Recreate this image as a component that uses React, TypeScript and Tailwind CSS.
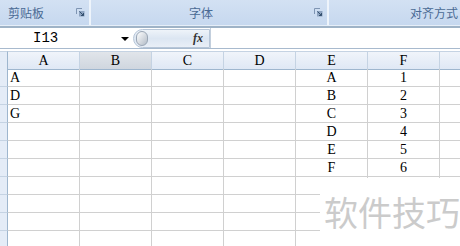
import React from "react";

const cols = ["A", "B", "C", "D", "E", "F"];

const rows: string[][] = [
  ["A", "", "", "", "A", "1"],
  ["D", "", "", "", "B", "2"],
  ["G", "", "", "", "C", "3"],
  ["", "", "", "", "D", "4"],
  ["", "", "", "", "E", "5"],
  ["", "", "", "", "F", "6"],
  ["", "", "", "", "", ""],
  ["", "", "", "", "", ""],
  ["", "", "", "", "", ""],
  ["", "", "", "", "", ""],
];

function Launcher() {
  return (
    <svg width="9" height="9" viewBox="0 0 9 9" className="shrink-0">
      <path d="M0.5 0.5 H6 M0.5 0.5 V6" stroke="#7f95b3" strokeWidth="1" fill="none" />
      <rect x="3" y="3" width="5.5" height="5.5" fill="#8da3c0" />
      <path d="M3.5 3.5 L7.5 7.5 M5 7.5 H7.5 V5" stroke="#34506f" strokeWidth="1" fill="none" />
    </svg>
  );
}

const cjk = { fontFamily: '"Noto Sans CJK SC", sans-serif' };

export default function App() {
  return (
    <div className="w-[460px] h-[246px] overflow-hidden relative bg-white" style={{ fontFamily: '"Liberation Serif", serif' }}>
      {/* ribbon group labels */}
      <div className="h-[25px] flex bg-[#dfe9f6]">
        <div className="w-[91px] h-full flex items-center bg-gradient-to-b from-[#d3e1f3] to-[#c6d8ef] border-r-2 border-[#eef4fb] relative">
          <span className="pl-[8px] text-[12px] text-[#4a6a94]" style={cjk}>剪贴板</span>
          <div className="absolute right-[4px] top-[8px]">
            <Launcher />
          </div>
        </div>
        <div className="w-[238px] h-full flex items-center justify-center bg-gradient-to-b from-[#d3e1f3] to-[#c6d8ef] border-r-2 border-[#eef4fb] relative">
          <span className="text-[12px] text-[#4a6a94] pr-[16px]" style={cjk}>字体</span>
          <div className="absolute right-[4px] top-[8px]">
            <Launcher />
          </div>
        </div>
        <div className="flex-1 h-full flex items-center justify-end pr-[2px] bg-gradient-to-b from-[#d3e1f3] to-[#c6d8ef]">
          <span className="text-[12px] text-[#4a6a94]" style={cjk}>对齐方式</span>
        </div>
      </div>
      <div className="h-[1px] bg-[#e6eef8]" />
      <div className="h-[2px] bg-[#9fb3c7]" />

      {/* formula bar */}
      <div className="h-[20px] flex items-center bg-white">
        <div className="w-[133px] h-full flex items-center relative">
          <span className="pl-[33px] text-[14px] text-black" style={{ fontFamily: '"Liberation Mono", monospace' }}>I13</span>
          <div className="absolute left-[121px] top-[9px] w-0 h-0 border-l-[4px] border-r-[4px] border-t-[4px] border-l-transparent border-r-transparent border-t-black" />
        </div>
        <div className="w-[77px] h-[19px] flex items-center relative rounded-l-full bg-gradient-to-b from-[#eef3f9] via-[#dce6f2] to-[#e9eff7] border border-[#b7c6d8]">
          <div className="ml-[2px] w-[12px] h-[15px] rounded-full bg-gradient-to-br from-[#ffffff] to-[#b3bcc7] border border-[#9aa6b5]" />
          <span className="ml-auto mr-[6px] text-[12px] italic font-bold text-[#333]">fx</span>
        </div>
        <div className="flex-1 h-full border-l border-[#c3cfdd] bg-white" />
      </div>
      <div className="h-[1px] bg-[#a8bace]" />
      <div className="h-[2px] bg-white" />

      {/* sheet grid */}
      <div className="grid grid-cols-[8px_72px_72px_72px_72px_72px_72px_20px] auto-rows-[18px]">
        <div className="h-[19px] bg-[#e4ecf7] border-r border-b border-[#9eb6ce] border-t border-t-[#c5d3e3]" />
        {cols.map((c) => (
          <div
            key={c}
            className={`h-[19px] flex items-center justify-center text-[14px] text-black border-r border-b border-t border-t-[#c5d3e3] border-r-[#c5d3e3] border-b-[#9eb6ce] ${
              c === "B" ? "bg-gradient-to-b from-[#e1e5ea] to-[#cfd6df]" : "bg-gradient-to-b from-[#f0f4fa] to-[#dfe8f5]"
            }`}
          >
            {c}
          </div>
        ))}
        <div className="h-[19px] border-b border-t border-t-[#c5d3e3] border-b-[#9eb6ce] bg-gradient-to-b from-[#f0f4fa] to-[#dfe8f5]" />

        {rows.map((r, i) => (
          <React.Fragment key={i}>
            <div className="bg-[#e4ecf7] border-r border-b border-r-[#9eb6ce] border-b-[#c5d3e3]" />
            {r.map((v, j) => (
              <div
                key={j}
                className={`border-r border-b border-[#d0d0d0] flex items-center text-[14px] text-black leading-none ${
                  j >= 4 ? "justify-center" : "pl-[2px]"
                }`}
              >
                {v}
              </div>
            ))}
            <div className="border-b border-[#d0d0d0]" />
          </React.Fragment>
        ))}
      </div>

      {/* watermark */}
      <div className="absolute left-[320px] top-[178px] w-[140px] h-[68px] bg-white flex items-start pt-[17px] pl-[4px]">
        <span className="text-[34px] leading-none text-[#cbcbcb]" style={cjk}>软件技巧</span>
      </div>
    </div>
  );
}
